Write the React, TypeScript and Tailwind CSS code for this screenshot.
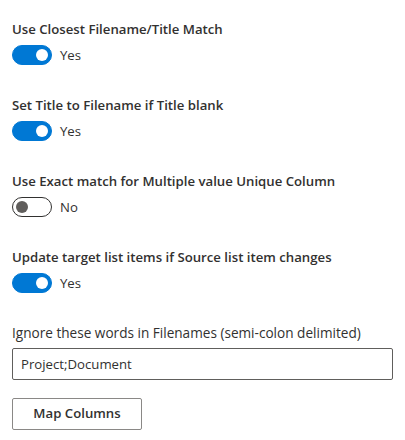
import { useState } from "react";

type ToggleProps = { label: string; checked: boolean; onChange: (v: boolean) => void };

function ToggleField({ label, checked, onChange }: ToggleProps) {
  return (
    <div className="h-[76px]">
      <div className="py-[5px] text-[13.2px] leading-5 font-semibold text-[#323130]">{label}</div>
      <div className="flex items-center mt-px h-5">
        <button
          type="button"
          onClick={() => onChange(!checked)}
          className={
            checked
              ? "w-10 h-5 rounded-full flex items-center justify-end px-[3px] bg-[#0078d4] border border-[#0078d4]"
              : "w-10 h-5 rounded-full flex items-center justify-start px-[3px] bg-white border border-[#323130]"
          }
        >
          <span className={checked ? "w-3 h-3 rounded-full bg-white" : "w-3 h-3 rounded-full bg-[#605e5c]"} />
        </button>
        <span className="ml-2 text-[13.2px] leading-5 text-[#323130]">{checked ? "Yes" : "No"}</span>
      </div>
    </div>
  );
}

export default function App() {
  const [closest, setClosest] = useState(true);
  const [setTitle, setSetTitle] = useState(true);
  const [exact, setExact] = useState(false);
  const [update, setUpdate] = useState(true);
  const [words, setWords] = useState("Project;Document");

  return (
    <div
      className="w-[405px] h-[440px] bg-white px-3 pt-[14px]"
      style={{ fontFamily: '"Segoe UI", "Open Sans", sans-serif' }}
    >
      <ToggleField label="Use Closest Filename/Title Match" checked={closest} onChange={setClosest} />
      <ToggleField label="Set Title to Filename if Title blank" checked={setTitle} onChange={setSetTitle} />
      <ToggleField label="Use Exact match for Multiple value Unique Column" checked={exact} onChange={setExact} />
      <ToggleField label="Update target list items if Source list item changes" checked={update} onChange={setUpdate} />

      {/* Ignore words */}
      <div className="py-[5px] text-[13.6px] leading-5 text-[#323130]">
        Ignore these words in Filenames (semi-colon delimited)
      </div>
      <input
        value={words}
        onChange={(e) => setWords(e.target.value)}
        className="w-[381px] h-8 px-2 border border-[#605e5c] rounded-[2px] text-[13.2px] text-[#323130] outline-none"
      />
      <button
        type="button"
        className="block mt-[18px] h-8 w-[130px] border border-[#8a8886] rounded-[2px] bg-white text-[13.2px] font-semibold text-[#323130]"
      >
        Map Columns
      </button>
    </div>
  );
}
